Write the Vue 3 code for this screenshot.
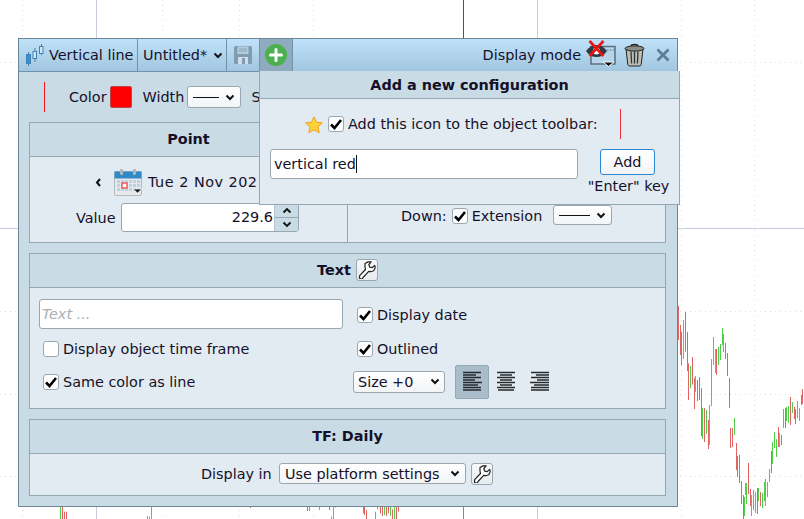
<script setup>
const R = '#e06464'
const G = '#50d048'
const right = [
  ['r',55,48,150],['r',61,105,195],['r',64,125,225],['g',70,90,207],['r',76,66,185],['r',82,126,243],['r',85,220,330],['g',91,228,294],['r',97,201,284],['r',103,264,357],['g',106,258,306],['r',112,270,333],['r',118,261,330],['r',124,294,438],['g',127,354,447],['r',133,354,456],['g',139,360,432],['r',145,390,477],['g',148,345,465],['g',154,207,348],['g',160,141,225],['g',166,177,249],['r',169,177,255],['g',175,171,225],['g',181,162,210],['g',187,114,165],['g',190,132,186],['r',196,159,207],['r',202,189,258],['r',208,264,354],['r',212,414,474],['r',217,414,471],['g',223,384,435],['r',229,459,540],['r',232,498,561],['r',238,495,579],['r',244,573,642],['r',250,615,687],['g',253,621,678],['g',256,579,615],['g',259,579,642],['r',265,519,612],['r',271,597,648],['g',274,615,678],['g',280,600,660],['g',286,606,669],['r',292,594,672],['g',295,594,633],['r',301,606,648],['g',307,609,654],['g',313,576,633],['g',316,567,648],['g',322,576,621],['g',328,537,576],['r',334,483,549],['g',337,456,522],['g',343,426,474],['g',349,447,501],['r',355,411,471],['g',358,429,471],['r',364,435,465],['g',370,357,414],['r',376,354,414],['g',379,351,393],['g',385,348,399],['r',391,321,405],['g',397,336,369],['r',403,351,387],['r',406,357,402],['g',412,333,384],['g',418,354,393],['r',424,315,345],['r',427,297,342]
]
const bottom = [
  ['g',182,290,327],['r',188,290,327],['r',194,305,327],['r',200,305,327],['g',442,318,327],['g',448,320,327],['g',454,290,327],['r',752,290,294],['r',922,290,303],['g',928,290,303],['g',958,290,300],['r',988,290,300],['g',994,320,327],['g',1000,290,327],['g',1006,290,293],['r',1090,290,310],['r',1094,290,315],['r',1100,300,327],['g',1126,305,327],['g',1132,290,298],['r',1140,290,310],['r',1146,290,318],['g',1152,290,315],['r',1158,290,318],['r',1164,290,310],['g',1170,290,318],['r',1176,298,327],['g',1182,290,327],['r',1188,290,327],['r',1194,290,305],['r',1390,290,327]
]
const candles = [
  ...right.map(c => ({ x: Math.floor(660 + c[1] / 3), y: 290 + c[2] / 3, h: (c[3] - c[2]) / 3, f: c[0] === 'r' ? R : G })),
  ...bottom.map(c => ({ x: Math.floor(c[1] / 3), y: 410 + c[2] / 3, h: (c[3] - c[2]) / 3, f: c[0] === 'r' ? R : G }))
]
const calCells = [0, 1, 2, 3, 4, 5]
</script>

<template>
  <div class="page">
    <svg class="chart" width="804" height="519" viewBox="0 0 804 519">
      <g stroke="#dcdfe4" stroke-dasharray="1 4" stroke-width="1">
        <path d="M22.5 0V519M162.5 0V519M239.5 0V519M313.5 0V519M681.5 0V519M754.5 0V519" />
        <path d="M0 62.500H804M0 394.500H804M0 476.500H804M0 311.500H804" />
      </g>
      <path d="M96.500 0V519M537.500 0V519M0 228.500H804" stroke="#c8ced9" stroke-width="1" />
      <path d="M463.500 0V40" stroke="#c8202c" stroke-width="1" />
      <rect v-for="(c, i) in candles" :key="i" :x="c.x" :y="c.y" width="1" :height="c.h" :fill="c.f" />
    </svg>

    <section class="win">
      <header class="bar">
        <div class="tab tab-name">
          <svg width="20" height="22" viewBox="0 0 20 22" class="logo">
            <path d="M3.500 9v14M10 5v14M16.500 0v12" stroke="#3f82b8" stroke-width="1" fill="none" transform="translate(0 -1)" />
            <rect x="1.500" y="10.500" width="4" height="9" fill="#3f8ec9" stroke="#3f82b8" />
            <rect x="8" y="7.500" width="3.500" height="7" fill="#cfe6f6" stroke="#3f82b8" />
            <rect x="14.500" y="2.500" width="3.500" height="7" fill="#cfe6f6" stroke="#3f82b8" />
          </svg>
          <span>Vertical line</span>
        </div>
        <div class="tab tab-config">
          <span>Untitled*</span>
          <svg width="10" height="7" viewBox="0 0 10 7"><path d="M1.500 1.500 5 5l3.500-3.500" fill="none" stroke="#111" stroke-width="2" /></svg>
        </div>
        <div class="tab tab-save">
          <svg width="20" height="20" viewBox="0 0 20 20">
            <path d="M1 2.500A1.500 1.500 0 0 1 2.500 1h15A1.500 1.500 0 0 1 19 2.500v15a1.500 1.500 0 0 1-1.500 1.500h-15A1.500 1.500 0 0 1 1 17.500z" fill="#7f9cb3" />
            <rect x="4.500" y="1.500" width="11" height="7.500" fill="#b6cbdb" />
            <path d="M6 4h8M6 6h8" stroke="#8aa5ba" />
            <rect x="5" y="12" width="10" height="7" fill="#cfdde8" />
            <rect x="9" y="13" width="3" height="6" fill="#7f9cb3" />
          </svg>
        </div>
        <div class="tab tab-plus">
          <svg width="24" height="24" viewBox="0 0 24 24">
            <circle cx="12" cy="12" r="11" fill="#4caf50" />
            <path d="M12 6.500v11M6.500 12h11" stroke="#fff" stroke-width="3" stroke-linecap="round" />
          </svg>
        </div>
        <span class="bar-fill"></span>
        <span class="mode-label">Display mode</span>
        <svg class="mode-icon" width="31" height="30" viewBox="0 0 31 30">
          <path d="M6 6.500h24V24H6z" fill="#b6d4ea" stroke="#5b6f7d" stroke-width="1.500" />
          <path d="M22 10h7" stroke="#5b6f7d" stroke-dasharray="1.500 1.500" />
          <path d="M1 11c3-4 6-6 10.500-6S19 7 22 11c-3 4-6 6-10.500 6S4 15 1 11z" fill="#2e3a46" />
          <circle cx="11.500" cy="11" r="3.500" fill="#eef3f7" />
          <path d="M4.500 1 18.500 16M18.500 1 4.500 16" stroke="#ef1111" stroke-width="2.600" />
          <path d="M18 22h11l-5.500 4.500z" fill="#111" stroke="#fff" stroke-width="1" />
        </svg>
        <svg class="trash" width="21" height="24" viewBox="0 0 21 24">
          <path d="M2 6h17l-1.800 15.500a2 2 0 0 1-2 1.500H5.800a2 2 0 0 1-2-1.500z" fill="#bdbdb8" stroke="#222" stroke-width="1" />
          <path d="M7 8.500l.6 12M10.500 8.500v12M14 8.500l-.6 12" stroke="#333" stroke-width="1.300" />
          <ellipse cx="10.500" cy="5.500" rx="9.500" ry="2.600" fill="#8d8d88" stroke="#222" />
          <path d="M7 3c.5-2 6.500-2 7 0" fill="none" stroke="#222" stroke-width="1.300" />
        </svg>
        <svg class="close" width="14" height="14" viewBox="0 0 14 14"><path d="m1.500 1.500 11 11m0-11-11 11" stroke="#5f7d92" stroke-width="2.800" /></svg>
      </header>

      <div class="content">
        <div class="style-row">
          <span class="vline"></span>
          <span class="lbl-color">Color</span>
          <span class="swatch"></span>
          <span class="lbl-width">Width</span>
          <div class="sel sel-width"><span class="dash"></span><svg width="10" height="7" viewBox="0 0 10 7"><path d="M1.500 1.500 5 5l3.500-3.500" fill="none" stroke="#111" stroke-width="2" /></svg></div>
          <span class="lbl-style">Style</span>
        </div>

        <div class="panel">
          <div class="split-head">
            <div class="panel-head head-left">Point</div>
            <div class="panel-head head-right"></div>
          </div>
          <div class="point-body">
            <div class="point-left">
              <div class="date-row">
                <svg width="7" height="9" viewBox="0 0 7 9" class="prev"><path d="M5 1 2 4.500 5 8" fill="none" stroke="#111" stroke-width="2" /></svg>
                <svg width="29" height="29" viewBox="0 0 29 29" class="cal">
                  <rect x=".5" y="3.500" width="27" height="24" rx="1.500" fill="#e6e9ec" stroke="#b4bcc2" />
                  <rect x=".5" y="3.500" width="27" height="7" fill="#2f8ac6" />
                  <rect x="6" y="1" width="3" height="6" rx="1.200" fill="#aeb6bc" />
                  <rect x="19" y="1" width="3" height="6" rx="1.200" fill="#aeb6bc" />
                  <g fill="#bcd3e6">
                    <rect v-for="c in calCells" :key="'a' + c" :x="3 + c * 4" y="12" width="3" height="3" />
                    <rect v-for="c in calCells" :key="'b' + c" :x="3 + c * 4" y="16" width="3" height="3" />
                    <rect v-for="c in calCells" :key="'d' + c" :x="3 + c * 4" y="20" width="3" height="3" />
                  </g>
                  <rect x="8" y="15" width="5" height="5" fill="#fff" stroke="#ef5a5a" stroke-width="1.500" />
                  <path d="M19 21h9l-4.500 4z" fill="#111" stroke="#fff" stroke-width=".8" />
                </svg>
                <span class="date-text">Tue 2 Nov 2021</span>
              </div>
              <div class="value-row">
                <span class="value-label">Value</span>
                <div class="spin">
                  <span class="spin-val">229.6</span>
                  <div class="spin-btns">
                    <div><svg width="10" height="7" viewBox="0 0 10 7"><path d="M1.500 5.500 5 2l3.500 3.500" fill="none" stroke="#111" stroke-width="1.800" /></svg></div>
                    <div><svg width="10" height="7" viewBox="0 0 10 7"><path d="M1.500 1.500 5 5l3.500-3.500" fill="none" stroke="#111" stroke-width="1.800" /></svg></div>
                  </div>
                </div>
              </div>
            </div>
            <div class="point-right">
              <span class="down-label">Down:</span>
              <span class="chk"><svg width="14" height="12" viewBox="0 0 14 12"><path d="M2 6.500 5.500 10 12 2" fill="none" stroke="#000" stroke-width="2.600" /></svg></span>
              <span>Extension</span>
              <div class="sel sel-ext"><span class="dash"></span><svg width="10" height="7" viewBox="0 0 10 7"><path d="M1.500 1.500 5 5l3.500-3.500" fill="none" stroke="#111" stroke-width="2" /></svg></div>
            </div>
          </div>
        </div>

        <div class="panel">
          <div class="panel-head">
            <span>Text</span>
            <span class="wrench-btn">
              <svg width="18" height="18" viewBox="0 0 18 18"><path d="M7 2.500 10 .9h3.200l-2.400 2.600.9 2.600 2.600.6 2.400-2.400.5 2.400-1.500 3-3 1-2-.3L5 16.500a1.700 1.700 0 0 1-3.500-.6l.2-1.300L7.500 8.500 7 6z" fill="#fff" stroke="#222" stroke-width="1.200" stroke-linejoin="round" /></svg>
            </span>
          </div>
          <div class="text-body">
            <div class="text-input">Text ...</div>
            <label class="opt opt-first"><span class="chk"><svg width="14" height="12" viewBox="0 0 14 12"><path d="M2 6.500 5.500 10 12 2" fill="none" stroke="#000" stroke-width="2.600" /></svg></span>Display date</label>
            <label class="opt opt-left opt-mid"><span class="chk"></span>Display object time frame</label>
            <label class="opt opt-mid"><span class="chk"><svg width="14" height="12" viewBox="0 0 14 12"><path d="M2 6.500 5.500 10 12 2" fill="none" stroke="#000" stroke-width="2.600" /></svg></span>Outlined</label>
            <label class="opt opt-left opt-last"><span class="chk"><svg width="14" height="12" viewBox="0 0 14 12"><path d="M2 6.500 5.500 10 12 2" fill="none" stroke="#000" stroke-width="2.600" /></svg></span>Same color as line</label>
            <div class="fmt-row">
              <div class="sel sel-size"><span>Size +0</span><svg width="10" height="7" viewBox="0 0 10 7"><path d="M1.500 1.500 5 5l3.500-3.500" fill="none" stroke="#111" stroke-width="2" /></svg></div>
              <div class="align active">
                <svg width="20" height="22" viewBox="0 0 20 22"><path d="M1 1.500h18M1 4h13M1 6.500h18M1 9h12M1 11.500h19M1 14h15M1 16.500h18M1 19h18" stroke="#262a2e" stroke-width="1.300" /></svg>
              </div>
              <div class="align">
                <svg width="20" height="22" viewBox="0 0 20 22"><path d="M1 1.500h18M4 4h12M1 6.500h18M4 9h12M1 11.500h18M4 14h12M1 16.500h18M2 19h16" stroke="#262a2e" stroke-width="1.300" /></svg>
              </div>
              <div class="align">
                <svg width="20" height="22" viewBox="0 0 20 22"><path d="M1 1.500h18M6 4h13M1 6.500h18M7 9h12M0 11.500h19M4 14h15M1 16.500h18M1 19h18" stroke="#262a2e" stroke-width="1.300" /></svg>
              </div>
            </div>
          </div>
        </div>

        <div class="panel">
          <div class="panel-head">TF: Daily</div>
          <div class="tf-body">
            <span class="tf-label">Display in</span>
            <div class="sel sel-tf"><span>Use platform settings</span><svg width="10" height="7" viewBox="0 0 10 7"><path d="M1.500 1.500 5 5l3.500-3.500" fill="none" stroke="#111" stroke-width="2" /></svg></div>
            <span class="wrench-btn">
              <svg width="18" height="18" viewBox="0 0 18 18"><path d="M7 2.500 10 .9h3.200l-2.400 2.600.9 2.600 2.600.6 2.400-2.400.5 2.400-1.500 3-3 1-2-.3L5 16.500a1.700 1.700 0 0 1-3.500-.6l.2-1.300L7.500 8.500 7 6z" fill="#fff" stroke="#222" stroke-width="1.200" stroke-linejoin="round" /></svg>
            </span>
          </div>
        </div>
      </div>
    </section>

    <aside class="pop">
      <div class="pop-head">Add a new configuration</div>
      <div class="pop-body">
        <div class="pop-row1">
          <svg width="18" height="17" viewBox="0 0 18 17" class="star"><path d="m9 .8 2.500 5.400 5.900.7-4.400 4 1.200 5.800L9 13.800l-5.200 2.900L5 10.900.6 6.900l5.900-.7z" fill="#ffd23a" stroke="#f0a020" stroke-width="1" /></svg>
          <span class="chk"><svg width="14" height="12" viewBox="0 0 14 12"><path d="M2 6.500 5.500 10 12 2" fill="none" stroke="#000" stroke-width="2.600" /></svg></span>
          <span class="add-label">Add this icon to the object toolbar:</span>
          <span class="vline pop-vline"></span>
        </div>
        <div class="pop-row2">
          <div class="name-input"><span>vertical red</span><span class="caret"></span></div>
          <div class="add-col">
            <div class="add-btn">Add</div>
            <div class="enter">"Enter" key</div>
          </div>
        </div>
      </div>
    </aside>
  </div>
</template>

<style>
html, body { margin: 0; background: #fff; }
</style>

<style scoped>
.page {
  position: relative;
  width: 804px;
  height: 519px;
  overflow: hidden;
  background: #fff;
  font-family: "DejaVu Sans", sans-serif;
  font-size: 14.4px;
  color: #15102a;
}
.chart { position: absolute; left: 0; top: 0; }
.win {
  position: absolute;
  left: 18px;
  top: 38px;
  width: 658px;
  height: 467px;
  border: 1px solid #6c8797;
  background: #c9dbe5;
}
.bar {
  display: flex;
  align-items: center;
  height: 32px;
  border-bottom: 1px solid #6f93ad;
  background: linear-gradient(#bfe2fa, #a3c6e0);
}
.tab {
  display: flex;
  align-items: center;
  height: 100%;
  border-right: 1px solid #6f93ad;
  box-sizing: border-box;
}
.tab-name { width: 119px; padding-left: 6px; gap: 4px; white-space: nowrap; }
.logo { flex: none; }
.tab-config { width: 89px; padding-left: 5px; gap: 6px; }
.tab-save { width: 33px; justify-content: center; }
.tab-plus { width: 33px; justify-content: center; background: #8fabbf; }
.bar-fill { flex: 1; }
.mode-label { margin-right: 4px; }
.mode-icon { margin-right: 8px; }
.trash { margin-right: 11px; }
.close { margin-right: 7px; }

.content { display: flex; flex-direction: column; padding: 0 10px; }
.panel + .panel { margin-top: 10px; }
.style-row { display: flex; align-items: center; height: 50px; }
.vline { width: 1px; height: 30px; background: #f01820; flex: none; }
.style-row .vline { margin-left: 15px; }
.lbl-color { margin-left: 24px; }
.swatch { width: 20px; height: 20px; margin-left: 3px; background: #ff0000; border: 1px solid #b8454a; border-radius: 2px; }
.lbl-width { margin-left: 11px; }
.lbl-style { margin-left: 10px; }
.sel {
  display: flex;
  align-items: center;
  justify-content: space-between;
  box-sizing: border-box;
  background: linear-gradient(#fff, #f2f4f6);
  border: 1px solid #9aa7b0;
  border-radius: 3px;
  padding: 0 5px;
  white-space: nowrap;
}
.sel-width { width: 54px; height: 22px; margin-left: 3px; }
.dash { display: block; flex: 1; height: 1px; margin-right: 6px; background: #111; }
.panel { border: 1px solid #93a7b3; background: #e2ebf1; width: 635px; }
.panel-head {
  display: flex;
  align-items: center;
  justify-content: center;
  gap: 5px;
  box-sizing: border-box;
  height: 34px;
  padding-bottom: 2px;
  font-weight: 700;
  font-size: 14.4px;
  background: #c9dbe5;
  border-bottom: 1px solid #93a7b3;
}
.split-head { display: flex; }
.head-left { width: 318px; border-right: 1px solid #93a7b3; }
.head-right { flex: 1; }
.point-body { display: flex; height: 85px; }
.point-left { width: 317px; border-right: 1px solid #93a7b3; }
.date-row { display: flex; align-items: center; box-sizing: border-box; height: 46px; padding-top: 4px; overflow: hidden; }
.prev { margin-left: 65px; }
.cal { margin-left: 12px; }
.date-text { margin-left: 5px; white-space: nowrap; letter-spacing: .5px; }
.value-row { display: flex; align-items: center; padding-left: 46px; }
.value-label { width: 45px; flex: none; }
.spin {
  display: flex;
  width: 178px;
  height: 29px;
  box-sizing: border-box;
  border: 1px solid #9aa7b0;
  border-radius: 3px;
  background: #fff;
}
.spin-val { flex: 1; text-align: right; line-height: 27px; padding-right: 1px; }
.spin-btns { width: 23px; background: #c9dbe5; border-left: 1px solid #b7c5ce; display: flex; flex-direction: column; }
.spin-btns div { flex: 1; display: flex; align-items: center; justify-content: center; }
.spin-btns div + div { border-top: 1px solid #9aa7b0; }
.point-right { flex: 1; display: flex; align-items: flex-start; padding: 49px 0 0 53px; gap: 4px; line-height: 20px; }
.point-right .chk { margin-top: 2px; }
.down-label { margin-right: 1px; }
.sel-ext { width: 59px; height: 20px; margin-left: 7px; margin-top: -1px; }
.chk {
  display: flex;
  align-items: center;
  justify-content: center;
  flex: none;
  width: 16px;
  height: 16px;
  box-sizing: border-box;
  background: #fff;
  border: 1px solid #9aa7b0;
  border-radius: 3px;
}
.wrench-btn {
  display: flex;
  align-items: center;
  justify-content: center;
  width: 22px;
  height: 22px;
  box-sizing: border-box;
  background: linear-gradient(#f6f8f9, #e6ebef);
  border: 1px solid #9aa7b0;
  border-radius: 3px;
}
.text-body {
  display: grid;
  grid-template-columns: 304px 1fr;
  grid-template-rows: 30px 34px 34px;
  column-gap: 14px;
  row-gap: 1px;
  padding: 11px 0 0 9px;
  height: 109px;
}
.text-input {
  box-sizing: border-box;
  border: 1px solid #9aa7b0;
  border-radius: 3px;
  background: #fff;
  color: #a9afb5;
  font-style: italic;
  line-height: 28px;
  padding-left: 2px;
}
.opt { display: flex; align-items: center; gap: 4px; }
.opt-first { padding-top: 2px; }
.opt-left { margin-left: 4px; }
.opt-mid { padding-top: 4px; }
.opt-last { padding-top: 1px; margin-top: -1px; }
.fmt-row { display: flex; align-items: center; margin-left: -4px; margin-top: -1px; }
.sel-size { width: 92px; height: 22px; padding: 0 4px; }
.align { display: flex; align-items: center; justify-content: center; width: 34px; height: 34px; box-sizing: border-box; border-radius: 2px; }
.align.active { background: #a9bcc9; border: 1px solid #93a7b3; margin-left: 10px; }
.tf-body { display: flex; align-items: center; box-sizing: border-box; height: 41px; padding: 0 0 2px 171px; }
.tf-label { width: 78px; flex: none; white-space: nowrap; }
.sel-tf { width: 187px; height: 21px; }
.tf-body .wrench-btn { margin-left: 5px; }

.pop {
  position: absolute;
  left: 259px;
  top: 71px;
  width: 421px;
  height: 134px;
  background: #e2ebf1;
  border-right: 1px solid #93a7b3;
  border-bottom: 1px solid #93a7b3;
  border-left: 1px solid #93a7b3;
  box-sizing: border-box;
}
.pop-head {
  height: 27px;
  line-height: 28px;
  text-align: center;
  font-weight: 700;
  background: #c9dbe5;
  border-bottom: 1px solid #93a7b3;
}
.pop-body { padding: 10px 10px 0; }
.pop-row1 { display: flex; align-items: center; height: 30px; padding-left: 35px; }
.star { margin-right: 5px; }
.add-label { margin-left: 4px; white-space: nowrap; }
.pop-vline { margin-left: 22px; background: #e8343c; }
.pop-row2 { display: flex; margin-top: 10px; }
.name-input {
  display: flex;
  align-items: center;
  width: 308px;
  height: 30px;
  box-sizing: border-box;
  border: 1px solid #9aa7b0;
  border-radius: 3px;
  background: #fff;
  padding-left: 3px;
}
.caret { width: 1px; height: 18px; background: #111; }
.add-col { margin-left: 10px; width: 81px; display: flex; flex-direction: column; align-items: center; }
.add-btn {
  width: 55px;
  height: 26px;
  line-height: 24px;
  margin-right: 2px;
  box-sizing: border-box;
  text-align: center;
  border: 1px solid #2d86d6;
  border-radius: 3px;
  background: linear-gradient(#fff, #f2f4f6);
}
.enter { margin-top: 1px; white-space: nowrap; line-height: 20px; }
</style>
